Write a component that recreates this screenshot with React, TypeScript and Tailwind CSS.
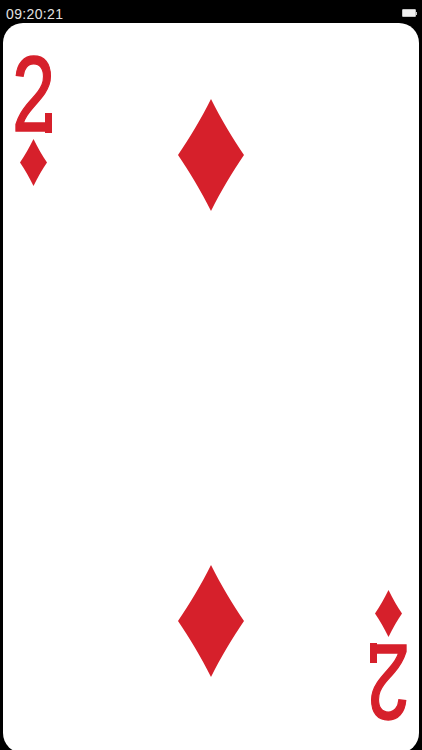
function Diamond({ className }: { className: string }) {
  return (
    <svg viewBox="0 0 66 112" preserveAspectRatio="none" className={className}>
      <path d="M33 0C43 20 55 40 66 56C55 72 43 92 33 112C23 92 11 72 0 56C11 40 23 20 33 0Z" fill="#d6202b" />
    </svg>
  );
}

function CornerIndex() {
  return (
    <div className="flex w-[37px] flex-col items-center">
      <div className="relative h-[78px] w-[37px]">
        <span className="flex h-[78px] w-[37px] scale-x-[0.72] justify-center font-['Liberation_Sans',sans-serif] text-[108px] leading-[78px] text-[#d6202b] [-webkit-text-stroke:1.5px_#d6202b]">
          2
        </span>
        {/* the upturned end of the foot of the 2 */}
        <div className="absolute bottom-0 right-0 h-[20px] w-[7px] bg-[#d6202b]" />
      </div>
      <Diamond className="mt-[6px] h-[47px] w-[27px]" />
    </div>
  );
}

function CardRow({ flipped }: { flipped?: boolean }) {
  return (
    <div className={flipped ? "grid rotate-180 grid-cols-[1fr_auto_1fr]" : "grid grid-cols-[1fr_auto_1fr]"}>
      <div className="pl-[12px] pt-[32px]">
        <CornerIndex />
      </div>
      <div className="pt-[76px]">
        <Diamond className="h-[112px] w-[66px]" />
      </div>
      <div />
    </div>
  );
}

export default function App() {
  return (
    <div className="h-[750px] w-[422px] overflow-hidden bg-black font-['Liberation_Sans',sans-serif]">
      <div className="flex h-[23px] items-start justify-between pl-[6px] pr-[5px]">
        <span className="pt-[8px] text-[14px] leading-[13px] tracking-[0.35px] text-[#e2e2e2]">09:20:21</span>
        <div className="flex items-center pt-[9px]">
          <div className="h-[8px] w-[14px] rounded-[1px] border border-[#c4c4c4] bg-[#f2f2f2]" />
          <div className="h-[3px] w-px bg-[#c4c4c4]" />
        </div>
      </div>
      <div className="mx-[3px] flex h-[730px] flex-col justify-between rounded-[20px] bg-white">
        <CardRow />
        <CardRow flipped />
      </div>
    </div>
  );
}
